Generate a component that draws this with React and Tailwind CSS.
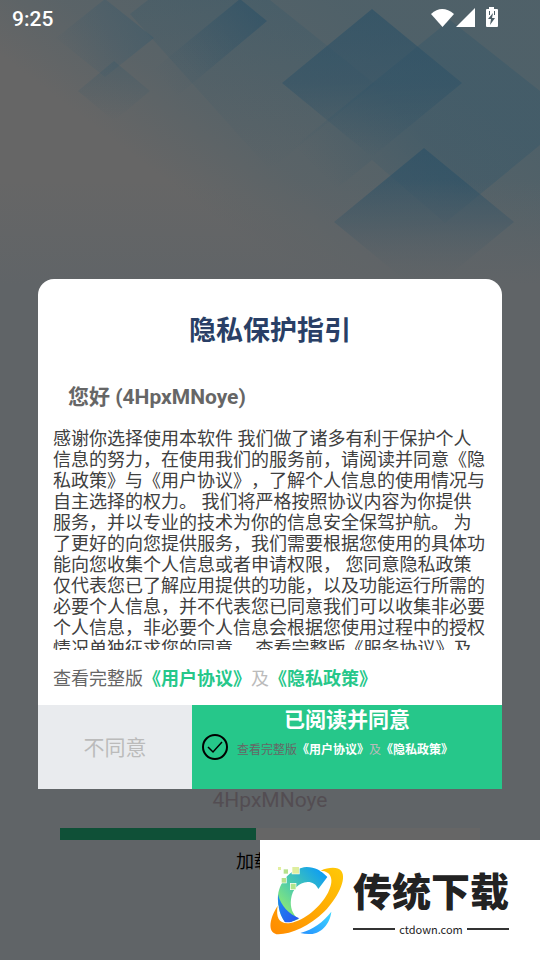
// Typed with plain commas, shown with full-width ones.
const PRIVACY_TEXT = [
    '感谢你选择使用本软件 我们做了诸多有利于保护个人信息的努力,在使用我们的服务前,请阅读并同意《隐私政策》与《用户协议》,了解个人信息的使用情况与自主选择的权力。',
    '我们将严格按照协议内容为你提供服务,并以专业的技术为你的信息安全保驾护航。',
    '为了更好的向您提供服务,我们需要根据您使用的具体功能向您收集个人信息或者申请权限, 您同意隐私政策仅代表您已了解应用提供的功能,以及功能运行所需的必要个人信息,并不代表您已同意我们可以收集非必要个人信息,非必要个人信息会根据您使用过程中的授权情况单独征求您的同意。',
    '查看完整版《服务协议》及《隐私政策》',
].join(' ').replace(/\u002c/g, '\uff0c');

const USER_NAME = '4HpxMNoye';
const PROGRESS = { value: 196, max: 420 };

function Backdrop() {
    return (
        <svg className="absolute inset-x-0 top-0 w-full" viewBox="0 0 540 300" aria-hidden="true">
            <defs>
                <linearGradient id="sky" gradientUnits="userSpaceOnUse" x1="125" y1="150" x2="275" y2="-48">
                    <stop offset="0" stopColor="#4c6069" stopOpacity="0" />
                    <stop offset="0.33" stopColor="#4c6069" stopOpacity="0.46" />
                    <stop offset="1" stopColor="#4c6069" stopOpacity="0.88" />
                </linearGradient>
                <linearGradient id="ground" x1="0" y1="0" x2="0" y2="1">
                    <stop offset="0.6" stopColor="#606467" stopOpacity="0" />
                    <stop offset="0.95" stopColor="#606467" />
                </linearGradient>
                <linearGradient id="down" x1="0" y1="0" x2="0" y2="1">
                    <stop offset="0" stopColor="#2b5066" stopOpacity="0.65" />
                    <stop offset="0.5" stopColor="#2b5066" stopOpacity="0.48" />
                    <stop offset="1" stopColor="#2b5066" stopOpacity="0" />
                </linearGradient>
                <linearGradient id="downSoft" x1="0" y1="0" x2="0" y2="1">
                    <stop offset="0" stopColor="#2f5568" stopOpacity="0.26" />
                    <stop offset="1" stopColor="#2f5568" stopOpacity="0" />
                </linearGradient>
                <linearGradient id="left" x1="1" y1="0.2" x2="0.1" y2="0.8">
                    <stop offset="0" stopColor="#2b5066" stopOpacity="0.6" />
                    <stop offset="0.75" stopColor="#2b5066" stopOpacity="0.08" />
                    <stop offset="1" stopColor="#2b5066" stopOpacity="0" />
                </linearGradient>
                <linearGradient id="leftSoft" x1="1" y1="0.3" x2="0" y2="0.7">
                    <stop offset="0" stopColor="#36586b" stopOpacity="0.45" />
                    <stop offset="1" stopColor="#36586b" stopOpacity="0" />
                </linearGradient>
                <linearGradient id="band" gradientUnits="userSpaceOnUse" x1="400" y1="110" x2="325" y2="180">
                    <stop offset="0" stopColor="#2f5468" stopOpacity="0.34" />
                    <stop offset="1" stopColor="#2f5468" stopOpacity="0" />
                </linearGradient>
            </defs>
            <rect width="540" height="300" fill="url(#sky)" />
            <path d="M148 0H270L375 84L270 170L130 14Z" fill="url(#downSoft)" />
            <path d="M105 -1L154 38L105 77L56 38Z" fill="url(#leftSoft)" />
            <path d="M114 61L150 91L114 121L78 91Z" fill="url(#downSoft)" />
            <path d="M240 -1L267 21L175 98L148 74Z" fill="url(#left)" />
            <path d="M450 20L540 91V145L445 223L372 160L325 198L290 150Z" fill="url(#band)" />
            <path d="M372 9L462 83L372 157L282 83Z" fill="url(#down)" />
            <path d="M424 148L514 222L424 296L334 222Z" fill="url(#down)" />
            <rect width="540" height="300" fill="url(#ground)" />
        </svg>
    );
}

function StatusBar() {
    return (
        <header className="relative flex h-9 items-center justify-between pt-[2px] pl-3 pr-10 text-white">
            <time className="text-[21px] leading-6 font-medium">9:25</time>
            <svg className="h-6 w-[70px]" viewBox="0 0 70 24" fill="currentColor" aria-hidden="true">
                <path d="M1 7Q12 -3 24 7L12.500 20Z" />
                <path d="M26 20L45 1V20Z" />
                <path d="M59 0h5v2h3q1 0 1 1v16q0 1-1 1H57q-1 0-1-1V3q0-1 1-1h2Z" />
                <path d="M63 6L58 12h3L60 18l5-7h-3Z" fill="#4d5f67" />
                <path d="M59 4h1v4h-1ZM64 4h1v4h-1Z" fill="#4d5f67" />
            </svg>
        </header>
    );
}

function SiteMark() {
    return (
        <svg className="h-[78px] w-[82px] shrink-0" viewBox="0 0 246 234" aria-hidden="true">
            <defs>
                <linearGradient id="arc" gradientUnits="userSpaceOnUse" x1="60" y1="150" x2="180" y2="40">
                    <stop offset="0" stopColor="#86e77c" />
                    <stop offset="0.45" stopColor="#45c7b2" />
                    <stop offset="1" stopColor="#0c9cf5" />
                </linearGradient>
                <linearGradient id="deep" x1="0" y1="0" x2="1" y2="1">
                    <stop offset="0" stopColor="#1c8df0" />
                    <stop offset="1" stopColor="#2a50ee" />
                </linearGradient>
                <linearGradient id="orbit" x1="0" y1="1" x2="1" y2="0">
                    <stop offset="0" stopColor="#ff8a00" />
                    <stop offset="1" stopColor="#ffc907" />
                </linearGradient>
                <linearGradient id="foot" x1="0" y1="1" x2="1" y2="0">
                    <stop offset="0" stopColor="#2490ff" />
                    <stop offset="1" stopColor="#3fd8ff" />
                </linearGradient>
            </defs>
            <path d="M184 48C166 28 147 19 122 18C78 21 42 57 36 103C34 137 43 169 62 188L98 175C79 160 72 139 75 115C79 84 98 64 125 63C140 63 149 69 157 84Z" fill="url(#arc)" />
            <path d="M36 100C34 137 43 169 62 190L100 172C69 159 45 137 36 100Z" fill="url(#deep)" />
            <path d="M103 216C142 205 171 184 196 152C192 190 164 218 134 219Q118 220 103 216Z" fill="url(#foot)" />
            <path d="M164 29C189 18 216 17 226 30C244 55 213 113 176 151C131 195 76 220 37 220C5 218 7 178 35 134C29 171 40 190 73 186C116 178 164 137 186 95C205 59 198 30 164 29Z" fill="url(#orbit)" stroke="#fff" strokeWidth="5" paintOrder="stroke" />
            <g stroke="#fff" strokeWidth="4" paintOrder="stroke">
                <path d="M36 18h9v9H36Z" fill="#e3efa0" />
                <path d="M53 25h13v13H53Z" fill="#b5e18c" />
                <path d="M79 18h20v20H79Z" fill="#deee9e" />
                <path d="M47 51h13v14H47Z" fill="#b5e18c" />
                <path d="M74 68h15v17H74Z" fill="#b0e58c" />
            </g>
        </svg>
    );
}

function Watermark() {
    return (
        <aside className="absolute right-0 bottom-0 flex h-[120px] w-[280px] items-center bg-white pl-[6px] text-[#222]">
            <SiteMark />
            <div className="ml-[5px] flex flex-col items-center pt-[2px]">
                <strong className="text-[39px] leading-[56px] font-black">传统下载</strong>
                <div className="flex w-full items-center gap-1">
                    <span className="h-[2px] flex-1 bg-[#333]" />
                    <span className="font-['Noto_Sans_CJK_SC',sans-serif] text-[11px] leading-4">ctdown.com</span>
                    <span className="h-[2px] flex-1 bg-[#333]" />
                </div>
            </div>
        </aside>
    );
}

function PrivacyDialog() {
    return (
        <section role="dialog" aria-labelledby="privacy-title" className="w-full overflow-hidden rounded-t-2xl bg-white">
            <h1 id="privacy-title" className="pt-8 text-center text-[27px] leading-10 font-bold text-[#293f66]">隐私保护指引</h1>
            <p className="mt-8 px-[30px] text-[21px] leading-7 font-bold text-[#666]">您好 ({USER_NAME})</p>
            <div className="mx-[15px] mt-[17px] h-[222px] overflow-y-auto text-[18px] leading-[21px] text-[#404040] [scrollbar-width:none]">
                {PRIVACY_TEXT}
            </div>
            <p className="mx-[15px] pt-[17px] pb-[14px] text-[18px] leading-6 whitespace-nowrap text-[#bbb]">
                <span className="text-[#666]">查看完整版</span>
                <a href="#terms" className="font-bold text-[#26c78a]">《用户协议》</a>
                及
                <a href="#privacy" className="font-bold text-[#26c78a]">《隐私政策》</a>
            </p>
            <div className="flex h-[84px]">
                <button type="button" className="flex-1 bg-[#e9ebee] pt-1 text-[21px] text-[#bbb]">不同意</button>
                <div className="flex w-[310px] flex-col bg-[#26c78a]">
                    <button type="button" className="pt-[2px] text-[21px] leading-[27px] font-bold text-white">已阅读并同意</button>
                    <div className="flex items-center pl-[10px]">
                        <svg className="size-[26px] shrink-0" viewBox="0 0 26 26" fill="none" stroke="#000" strokeWidth="2" aria-hidden="true">
                            <circle cx="13" cy="13" r="12" />
                            <path d="M6 13L11 18L20 8" strokeWidth="1.5" />
                        </svg>
                        <p className="ml-[9px] pt-[6px] text-[12px] leading-5 whitespace-nowrap text-[#bbb]">
                            <span className="text-[#666]">查看完整版</span>
                            <a href="#terms" className="font-bold text-white">《用户协议》</a>
                            及
                            <a href="#privacy" className="font-bold text-white">《隐私政策》</a>
                        </p>
                    </div>
                </div>
            </div>
        </section>
    );
}

export default function App() {
    return (
        <div lang="zh-CN" className="relative flex min-h-screen flex-col overflow-hidden bg-[#666] font-[Roboto,'Noto_Sans_CJK_SC',sans-serif] [text-spacing-trim:space-all]">
            <div className="absolute inset-x-0 top-[285px] bottom-0 bg-[#606467]" />
            <Backdrop />
            <StatusBar />
            <main className="relative flex flex-1 flex-col justify-end px-[60px] pb-[86px] text-center">
                <p className="text-[21px] leading-7 text-[#534d52]">{USER_NAME}</p>
                <div role="progressbar" aria-label="加载中" aria-valuenow={PROGRESS.value} aria-valuemax={PROGRESS.max} className="mt-[14px] h-3 bg-[#666]">
                    <div className="h-full bg-[#0f5037]" style={{ width: `${(PROGRESS.value / PROGRESS.max) * 100}%` }} />
                </div>
                <p className="mt-[10px] text-[18px] leading-6 text-black">加载中...</p>
            </main>
            <div className="absolute inset-0 flex items-center px-[38px] pt-[108px]">
                <PrivacyDialog />
            </div>
            <Watermark />
        </div>
    );
}
